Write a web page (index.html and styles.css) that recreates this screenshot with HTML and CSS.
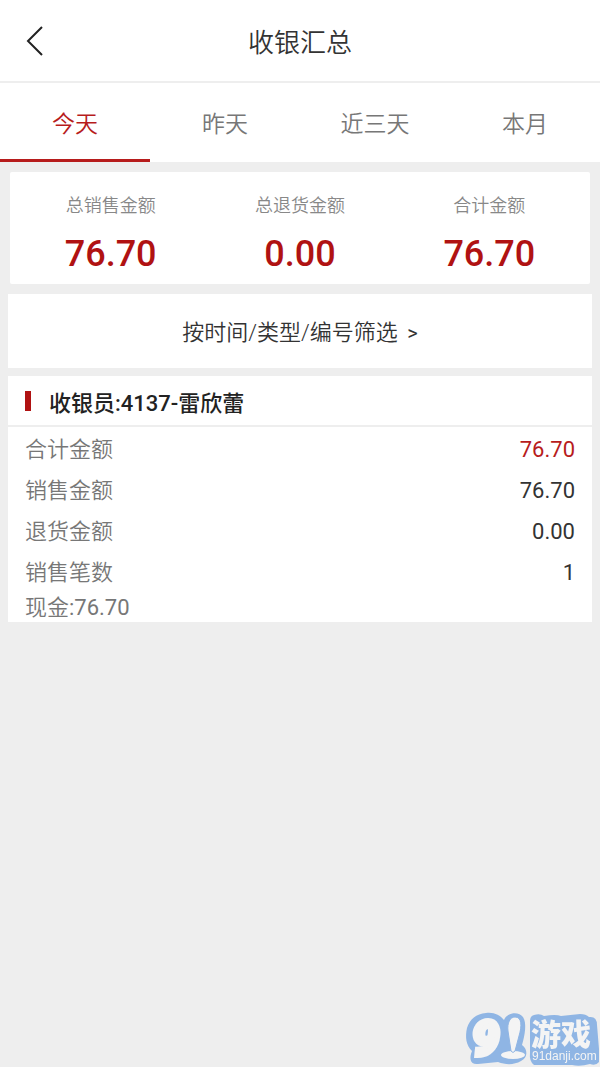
FILE: index.html
```html
<!DOCTYPE html>
<html lang="zh-CN">
<head>
  <meta charset="UTF-8">
  <meta name="viewport" content="width=device-width, initial-scale=1">
  <title>收银汇总</title>
  <link rel="stylesheet" href="styles.css">
</head>
<body>

<header class="header">
  <button class="back-btn" type="button" aria-label="返回">
    <svg width="18" height="32" viewBox="0 0 18 32"><path d="M16 2 L2 16 L16 30" fill="none" stroke="#222" stroke-width="2"/></svg>
  </button>
  <h1>收银汇总</h1>
</header>

<nav class="tabs">
  <button class="tab active" type="button">今天</button>
  <button class="tab" type="button">昨天</button>
  <button class="tab" type="button">近三天</button>
  <button class="tab" type="button">本月</button>
</nav>

<main>
  <dl class="totals">
    <div class="total">
      <dt>总销售金额</dt>
      <dd>76.70</dd>
    </div>
    <div class="total">
      <dt>总退货金额</dt>
      <dd>0.00</dd>
    </div>
    <div class="total">
      <dt>合计金额</dt>
      <dd>76.70</dd>
    </div>
  </dl>

  <button class="filter-btn" type="button">按时间/类型/编号筛选 <span class="arrow">&gt;</span></button>

  <section class="cashier">
    <h2>收银员:4137-雷欣蕾</h2>
    <dl class="rows">
      <div class="row">
        <dt>合计金额</dt>
        <dd class="red">76.70</dd>
      </div>
      <div class="row">
        <dt>销售金额</dt>
        <dd>76.70</dd>
      </div>
      <div class="row">
        <dt>退货金额</dt>
        <dd>0.00</dd>
      </div>
      <div class="row">
        <dt>销售笔数</dt>
        <dd>1</dd>
      </div>
    </dl>
    <p class="cash">现金<span class="num">:76.70</span></p>
  </section>
</main>

<!-- site badge -->
<svg class="badge" width="136" height="56" viewBox="0 0 136 56" role="img" aria-label="91游戏">
  <path class="badge-edge" d="M22 2 C30 1 36 4 40 9 C43 1 55 0 59 6 C63 12 61 24 58 34 C64 38 64 47 57 50 C50 54 42 54 34 51 L14 53 C6 54 5 47 8 40 C2 34 1 26 3 17 C6 8 12 3 22 2 Z"/>
  <path class="badge-edge" d="M70 4 Q76 2 80 5 Q92 3 97 5 L116 3 Q122 3 125 6 Q133 5 133 14 L135 38 L135 51 Q132 55 126 53 Q116 56 108 54 L70 54 Q65 50 66 42 L66 10 Q66 5 70 4 Z"/>
  <text class="nine" x="8" y="44">9</text>
  <g class="badge-face">
    <ellipse cx="49" cy="44" rx="12" ry="4"/>
    <path class="pen" d="M51 6 C58 6 58 15 55 25 L51 40 Q49 43 47 40 L44 20 C43 12 46 6 51 6 Z"/>
    <text class="name" x="67" y="34">游戏</text>
    <text class="site" x="68" y="49">91danji.com</text>
  </g>
</svg>

</body>
</html>
```

FILE: styles.css
```css
* {
  box-sizing: border-box;
}
body {
  margin: 0;
  min-height: 100vh;
  background: #eee;
  color: #333;
  font-family: Roboto, "Noto Sans CJK SC", sans-serif;
  font-weight: 350;
  font-size: 22px;
}
h1, h2, p, dl, dd {
  margin: 0;
}
button {
  border: 0;
  padding: 0;
  background: #fff;
  color: inherit;
  font: inherit;
  cursor: pointer;
}

/* Header */
.header {
  display: grid;
  grid-template-columns: 70px 1fr 70px;
  align-items: center;
  height: 83px;
  background: #fff;
  border-bottom: 2px solid #eee;
}
.header h1 {
  font-size: 26px;
  font-weight: 350;
  text-align: center;
}
.back-btn {
  display: flex;
  justify-content: center;
}

/* Tabs */
.tabs {
  display: flex;
  background: #fff;
}
.tab {
  flex: 1;
  height: 79px;
  padding-top: 2px;
  border-bottom: 3px solid transparent;
  color: #777;
  font-size: 23px;
}
.tab.active {
  color: #b71c1c;
  border-bottom-color: #b71c1c;
}

/* Totals */
main {
  padding: 10px 8px;
}
.totals {
  display: flex;
  margin: 0 2px 10px;
  padding: 18px 6px 10px;
  background: #fff;
  border-radius: 2px;
}
.total {
  flex: 1;
  text-align: center;
}
.total dt {
  color: #888;
  font-size: 18px;
  line-height: 32px;
}
.total dd {
  padding-top: 12px;
  color: #b01212;
  font-size: 36px;
  font-weight: 500;
  line-height: 40px;
}

.filter-btn {
  display: block;
  width: 100%;
  height: 74px;
  margin-bottom: 8px;
  padding-bottom: 2px;
}
.arrow {
  margin-left: 4px;
  font-size: 20px;
  font-weight: 400;
}

/* Cashier details */
.cashier {
  background: #fff;
}
.cashier h2 {
  display: flex;
  align-items: center;
  gap: 18px;
  height: 51px;
  padding: 0 17px;
  border-bottom: 2px solid #eee;
  color: #222;
  font-size: 22px;
  font-weight: 500;
}
.cashier h2::before {
  content: "";
  width: 6px;
  height: 20px;
  background: #b01212;
}
.rows {
  padding-top: 2px;
}
.row {
  display: flex;
  justify-content: space-between;
  padding: 0 17px;
  line-height: 41px;
}
.row dt, .cash {
  color: #777;
}
.row dd, .num {
  font-weight: 400;
}
.row .red {
  color: #b71c1c;
}
.cash {
  padding: 0 17px;
  line-height: 29px;
}

/* Badge sits over the page corner */
.badge {
  position: fixed;
  right: 0;
  bottom: 0;
}
.badge-edge {
  fill: #8fb5e4;
}
.badge-face {
  fill: #f4f4f4;
}
.pen {
  stroke: #8fb5e4;
  stroke-width: 1;
}
.nine {
  fill: #f4f4f4;
  stroke: #f4f4f4;
  stroke-width: 5;
  font: italic 900 48px Roboto, sans-serif;
}
.name {
  font: 900 30px "Noto Sans CJK SC", sans-serif;
}
.site {
  font: 12px "Liberation Sans", sans-serif;
}
```
